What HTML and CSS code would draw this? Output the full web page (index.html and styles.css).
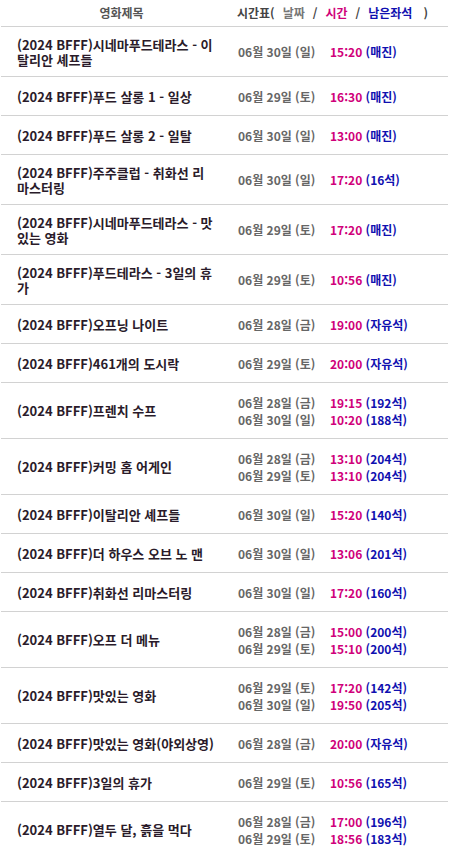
FILE: index.html
```html
<!DOCTYPE html>
<html lang="ko">
<head>
<meta charset="utf-8">
<link rel="stylesheet" href="styles.css">
</head>
<body>
<table class="sched">
  <thead>
    <tr>
      <th class="h-title">영화제목</th>
      <th class="h-time">시간표(<span class="hx c-date">날짜</span><span class="hx">/</span><span class="hx c-time">시간</span><span class="hx">/</span><span class="hx c-seat">남은좌석</span><span class="hx hx-end">)</span></th>
    </tr>
  </thead>
  <tbody>
    <tr><td class="title">(2024 BFFF)시네마푸드테라스 - 이<br>탈리안 셰프들</td><td class="times"><div class="slot"><span class="date">06월 30일 (일)</span><span class="time">15:20</span> <span class="seat">(매진)</span></div></td></tr>
    <tr><td class="title">(2024 BFFF)푸드 살롱 1 - 일상</td><td class="times"><div class="slot"><span class="date">06월 29일 (토)</span><span class="time">16:30</span> <span class="seat">(매진)</span></div></td></tr>
    <tr><td class="title">(2024 BFFF)푸드 살롱 2 - 일탈</td><td class="times"><div class="slot"><span class="date">06월 30일 (일)</span><span class="time">13:00</span> <span class="seat">(매진)</span></div></td></tr>
    <tr><td class="title">(2024 BFFF)주주클럽 - 취화선 리<br>마스터링</td><td class="times"><div class="slot"><span class="date">06월 30일 (일)</span><span class="time">17:20</span> <span class="seat">(16석)</span></div></td></tr>
    <tr><td class="title">(2024 BFFF)시네마푸드테라스 - 맛<br>있는 영화</td><td class="times"><div class="slot"><span class="date">06월 29일 (토)</span><span class="time">17:20</span> <span class="seat">(매진)</span></div></td></tr>
    <tr><td class="title">(2024 BFFF)푸드테라스 - 3일의 휴<br>가</td><td class="times"><div class="slot"><span class="date">06월 29일 (토)</span><span class="time">10:56</span> <span class="seat">(매진)</span></div></td></tr>
    <tr><td class="title">(2024 BFFF)오프닝 나이트</td><td class="times"><div class="slot"><span class="date">06월 28일 (금)</span><span class="time">19:00</span> <span class="seat">(자유석)</span></div></td></tr>
    <tr><td class="title">(2024 BFFF)461개의 도시락</td><td class="times"><div class="slot"><span class="date">06월 29일 (토)</span><span class="time">20:00</span> <span class="seat">(자유석)</span></div></td></tr>
    <tr><td class="title">(2024 BFFF)프렌치 수프</td><td class="times"><div class="slot"><span class="date">06월 28일 (금)</span><span class="time">19:15</span> <span class="seat">(192석)</span></div><div class="slot"><span class="date">06월 30일 (일)</span><span class="time">10:20</span> <span class="seat">(188석)</span></div></td></tr>
    <tr><td class="title">(2024 BFFF)커밍 홈 어게인</td><td class="times"><div class="slot"><span class="date">06월 28일 (금)</span><span class="time">13:10</span> <span class="seat">(204석)</span></div><div class="slot"><span class="date">06월 29일 (토)</span><span class="time">13:10</span> <span class="seat">(204석)</span></div></td></tr>
    <tr><td class="title">(2024 BFFF)이탈리안 셰프들</td><td class="times"><div class="slot"><span class="date">06월 30일 (일)</span><span class="time">15:20</span> <span class="seat">(140석)</span></div></td></tr>
    <tr><td class="title">(2024 BFFF)더 하우스 오브 노 맨</td><td class="times"><div class="slot"><span class="date">06월 30일 (일)</span><span class="time">13:06</span> <span class="seat">(201석)</span></div></td></tr>
    <tr><td class="title">(2024 BFFF)취화선 리마스터링</td><td class="times"><div class="slot"><span class="date">06월 30일 (일)</span><span class="time">17:20</span> <span class="seat">(160석)</span></div></td></tr>
    <tr><td class="title">(2024 BFFF)오프 더 메뉴</td><td class="times"><div class="slot"><span class="date">06월 28일 (금)</span><span class="time">15:00</span> <span class="seat">(200석)</span></div><div class="slot"><span class="date">06월 29일 (토)</span><span class="time">15:10</span> <span class="seat">(200석)</span></div></td></tr>
    <tr><td class="title">(2024 BFFF)맛있는 영화</td><td class="times"><div class="slot"><span class="date">06월 29일 (토)</span><span class="time">17:20</span> <span class="seat">(142석)</span></div><div class="slot"><span class="date">06월 30일 (일)</span><span class="time">19:50</span> <span class="seat">(205석)</span></div></td></tr>
    <tr><td class="title">(2024 BFFF)맛있는 영화(야외상영)</td><td class="times"><div class="slot"><span class="date">06월 28일 (금)</span><span class="time">20:00</span> <span class="seat">(자유석)</span></div></td></tr>
    <tr><td class="title">(2024 BFFF)3일의 휴가</td><td class="times"><div class="slot"><span class="date">06월 29일 (토)</span><span class="time">10:56</span> <span class="seat">(165석)</span></div></td></tr>
    <tr><td class="title">(2024 BFFF)열두 달, 흙을 먹다</td><td class="times"><div class="slot"><span class="date">06월 28일 (금)</span><span class="time">17:00</span> <span class="seat">(196석)</span></div><div class="slot"><span class="date">06월 29일 (토)</span><span class="time">18:56</span> <span class="seat">(183석)</span></div></td></tr>
  </tbody>
</table>
</body>
</html>
```

FILE: styles.css
```css
html, body {
  margin: 0;
  padding: 0;
  background: #fff;
}
body {
  font-family: "Noto Sans CJK KR", "Noto Sans", sans-serif;
  font-size: 12px;
  font-weight: 700;
}
.sched {
  border-collapse: collapse;
  margin-left: 1px;
  width: 447px;
  table-layout: fixed;
}
.sched th,
.sched td {
  padding: 0;
  border-bottom: 1px solid #d2d2d2;
  vertical-align: middle;
  text-align: left;
}
.sched thead th {
  height: 26px;
  line-height: 14px;
  color: #555;
  font-weight: 700;
  white-space: nowrap;
}
.h-title {
  width: 221px;
  text-align: center !important;
  padding-left: 20px !important;
  box-sizing: border-box;
}
.h-time {
  padding-left: 15px !important;
  color: #444 !important;
}
.hx {
  margin-left: 8px;
}
.hx-end {
  margin-left: 11px;
}
.c-date { color: #777; }
.c-time { color: #d0007a; }
.c-seat { color: #1010b0; }

.title {
  padding: 9.5px 4px 9.5px 16px !important;
  font-size: 13px;
  line-height: 15px;
  color: #2a1b2a;
  white-space: nowrap;
}
.times {
  padding: 10.5px 0 10.5px 16px !important;
}
.slot {
  line-height: 17px;
  white-space: nowrap;
}
.date {
  display: inline-block;
  width: 92px;
  color: #666;
}
.time {
  color: #d0007a;
}
.seat {
  color: #1010b0;
}
```
